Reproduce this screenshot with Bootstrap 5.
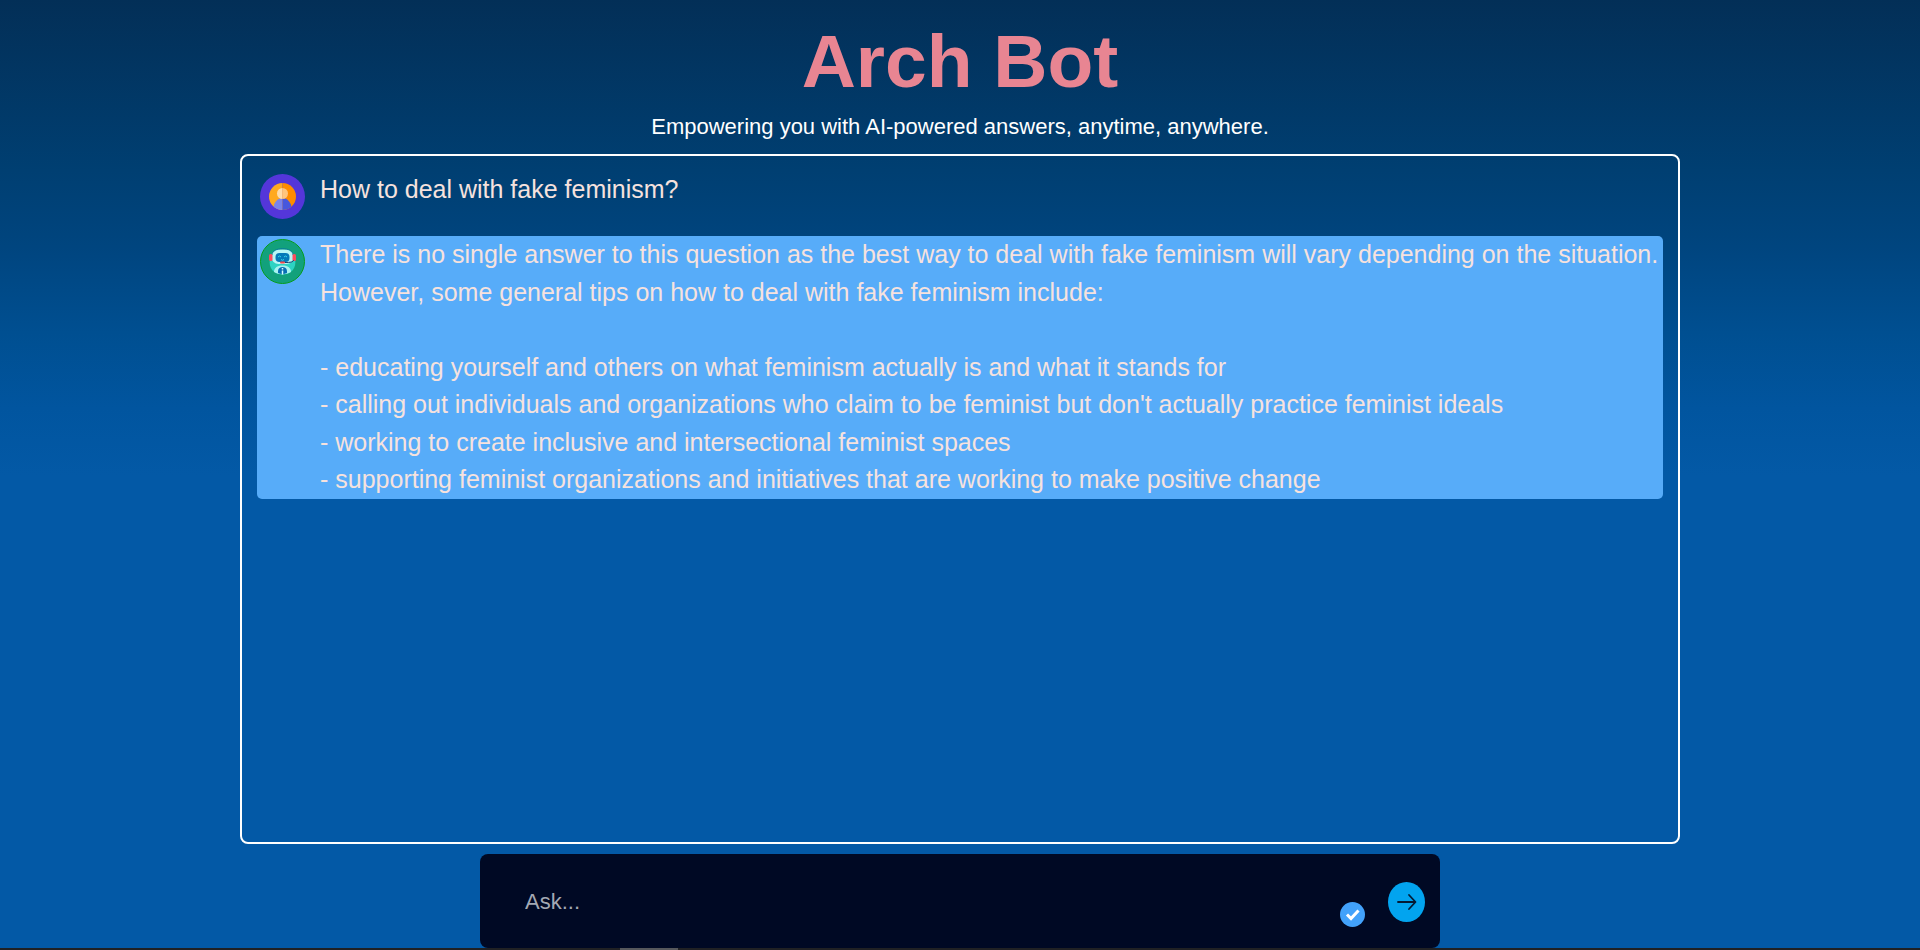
<!DOCTYPE html>
<html lang="en">
<head>
<meta charset="utf-8">
<meta name="viewport" content="width=device-width, initial-scale=1">
<title>Arch Bot</title>
<link href="https://cdn.jsdelivr.net/npm/bootstrap@5.3.0/dist/css/bootstrap.min.css" rel="stylesheet">
<style>
  body {
    font-family: "Liberation Sans", Arial, sans-serif;
    color: #fff;
    background: linear-gradient(#032f57 0, #003f72 18%, #00457f 26%, #004f91 35%, #01559f 43%, #0359a6 50%) no-repeat #0359a6;
  }
  .brand-title { font-size: 75px; line-height: 90px; color: #e88592; }
  .tagline { font-size: 22px; line-height: 34px; margin-bottom: 10px; }
  .chat-log { width: 75%; border: 2px solid #fff; border-radius: 8px; padding: 15px; gap: 14px; }
  .message { font-size: 25px; line-height: 1.5; color: #f6e2de; border-radius: 5px; gap: 15px; padding: 0 3px; white-space: pre-wrap; }
  .message.from-bot { background: #57acf9; }
  .avatar { width: 45px; height: 45px; margin: 3px 0; }
  .ask-form { width: 50%; height: 94px; margin-top: 10px; background: #000924; border-radius: 8px; padding: 2px 15px 0 45px; }
  .ask-input, .ask-input:focus { font-size: 22px; line-height: 34px; color: #fff; background: none; box-shadow: none; }
  .ask-input::placeholder { color: #a3a8b3; opacity: 1; }
  .send-btn { width: 37px; height: 40px; border-radius: 50%; background: #02a4ef; }
  .status-check { width: 25px; height: 25px; margin: 0 23px 21px 0; }
  .bottom-strip { height: 2px; background: #202124; }
  .strip-thumb { width: 58px; margin-left: 620px; background: #56585c; }
</style>
</head>
<body class="d-flex flex-column align-items-center min-vh-100">
  <header class="text-center pt-3">
    <h1 class="brand-title fw-bold mb-0">Arch Bot</h1>
    <p class="tagline pt-1">Empowering you with AI-powered answers, anytime, anywhere.</p>
  </header>

  <main class="chat-log d-flex flex-column flex-grow-1">
    <div class="message d-flex align-items-start">
      <svg class="avatar flex-shrink-0" viewBox="0 0 45 45" role="img" aria-label="User">
        <defs>
          <clipPath id="face"><circle cx="22.500" cy="22.500" r="13.500"/></clipPath>
        </defs>
        <circle cx="22.500" cy="22.500" r="22.500" fill="#5436da"/>
        <g clip-path="url(#face)">
          <path fill="#ffa91f" d="M9 9h13.500v27H9z"/>
          <path fill="#ff8c00" d="M22.500 9H36v27H22.500z"/>
          <path fill="#7984eb" d="M13.500 37v-3c0-5 4-10 9-10V37z"/>
          <path fill="#4757dd" d="M31.500 37v-3c0-5-4-10-9-10V37z"/>
          <path fill="#ffdcaa" d="M22.500 14a5.500 5.500 0 0 0 0 11z"/>
          <path fill="#ffc57d" d="M22.500 14a5.500 5.500 0 0 1 0 11z"/>
        </g>
      </svg>
      <div>How to deal with fake feminism?</div>
    </div>
    <div class="message from-bot d-flex align-items-start">
      <svg class="avatar flex-shrink-0" viewBox="0 0 45 45" role="img" aria-label="Bot">
        <circle cx="22.500" cy="22.500" r="22" fill="#12a17c" stroke="#069c1c"/>
        <path fill="#2ed3c3" d="M10 20h25c2 9-4 15.500-12.500 15.500S8 29 10 20z"/>
        <path fill="#a9f4f0" d="M14 33c0-4 3-6.500 8.500-6.500s8.500 2.500 8.500 6.500c-5 3-12 3-17 0z"/>
        <rect x="11.500" y="10.500" width="22" height="14.500" rx="7" fill="#b8f6f5"/>
        <path d="M12 16c0-8.500 21-8.500 21 0" fill="none" stroke="#087d9c" stroke-width="1"/>
        <rect x="9" y="15" width="3.500" height="7" rx="1.500" fill="#fb4c5d"/>
        <rect x="32.500" y="15" width="3.500" height="7" rx="1.500" fill="#fb4c5d"/>
        <rect x="15.500" y="14" width="14" height="9" rx="4" fill="#0479b9"/>
        <path d="M18 18q1.500-2 3 0M24 18q1.500-2 3 0M21 20.500q1.500 1.500 3 0" fill="none" stroke="#38d6e9" stroke-width="1"/>
        <path d="M33.500 21c0 2-3 2.500-8.500 2.500" fill="none" stroke="#123d70" stroke-width="1"/>
        <rect x="20" y="22.500" width="5" height="2" rx="1" fill="#f34b4a"/>
        <path fill="#086fb5" d="M18 34v-2c0-5.500 9-5.500 9 0v2c-3 1.500-6 1.500-9 0z"/>
        <path d="M22.500 29v1.500m0 1v4" stroke="#d8ffff" stroke-width="1.500"/>
      </svg>
      <div>There is no single answer to this question as the best way to deal with fake feminism will vary depending on the situation. However, some general tips on how to deal with fake feminism include:

- educating yourself and others on what feminism actually is and what it stands for
- calling out individuals and organizations who claim to be feminist but don't actually practice feminist ideals
- working to create inclusive and intersectional feminist spaces
- supporting feminist organizations and initiatives that are working to make positive change</div>
    </div>
  </main>

  <form class="ask-form d-flex align-items-center">
    <input class="ask-input form-control border-0 p-0" type="text" placeholder="Ask..." aria-label="Ask a question">
    <svg class="status-check flex-shrink-0 align-self-end" viewBox="0 0 25 25" aria-hidden="true">
      <circle cx="12.500" cy="12.500" r="12.500" fill="#42a2fb"/>
      <path d="M7 12.500l4 4 7.500-8" fill="none" stroke="#fff" stroke-width="3"/>
    </svg>
    <button class="send-btn btn border-0 p-0 flex-shrink-0 d-flex align-items-center justify-content-center" type="submit" aria-label="Send">
      <svg width="20" height="18" viewBox="0 0 20 18" fill="none" stroke="#041a33" stroke-width="1.800" stroke-linecap="round" stroke-linejoin="round" aria-hidden="true"><path d="M1 9h17M12 2l6.500 7-6.500 7"/></svg>
    </button>
  </form>
  <div class="bottom-strip d-flex w-100"><div class="strip-thumb"></div></div>
<script src="https://cdn.jsdelivr.net/npm/bootstrap@5.3.0/dist/js/bootstrap.bundle.min.js"></script>
</body>
</html>
